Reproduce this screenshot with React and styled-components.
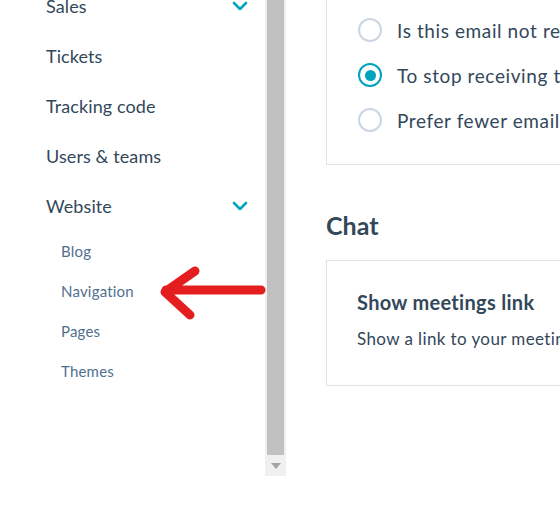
import React from 'react';
import styled, { createGlobalStyle } from 'styled-components';

const GlobalStyle = createGlobalStyle`
  html, body {
    margin: 0;
    padding: 0;
    background: #fff;
  }
  body {
    font-family: Lato, "Open Sans", sans-serif;
    color: #33475b;
    overflow: hidden;
  }
`;

const navItems = [
  { label: 'Sales', open: true },
  { label: 'Tickets' },
  { label: 'Tracking code' },
  { label: 'Users & teams' },
  { label: 'Website', open: true, children: ['Blog', 'Navigation', 'Pages', 'Themes'] }
];

const reasons = [
  { label: 'Is this email not relevant to you?' },
  { label: 'To stop receiving these emails', checked: true },
  { label: 'Prefer fewer emails from us' }
];

const Chevron = () => (
  <svg width="16" height="10" viewBox="0 0 16 10">
    <path d="M2 2l6 6 6-6" fill="none" stroke="#00a4bd" strokeWidth="2.6" strokeLinecap="round" strokeLinejoin="round" />
  </svg>
);

const App = () => (
  <Page>
    <GlobalStyle />
    <Sidebar>
      <Nav>
        {navItems.map((item) => (
          <React.Fragment key={item.label}>
            <NavItem>
              <span>{item.label}</span>
              {item.open && <Chevron />}
            </NavItem>
            {item.children && (
              <SubList>
                {item.children.map((c) => (
                  <SubItem key={c}>{c}</SubItem>
                ))}
              </SubList>
            )}
          </React.Fragment>
        ))}
      </Nav>
      <Scrollbar>
        <Thumb />
        <ArrowBtn>
          <svg width="10" height="6" viewBox="0 0 10 6">
            <path d="M0 0h10L5 6z" fill="#a3a3a3" />
          </svg>
        </ArrowBtn>
      </Scrollbar>
      <Annotation width="110" height="60" viewBox="0 0 110 60">
        <path
          d="M103 25 H8 M37 6 L7 27 L32 50"
          fill="none"
          stroke="#e41e1e"
          strokeWidth="9"
          strokeLinecap="round"
          strokeLinejoin="round"
        />
      </Annotation>
    </Sidebar>
    <Main>
      <Card top>
        <RadioList>
          {reasons.map((r) => (
            <RadioRow key={r.label}>
              <Radio checked={r.checked} />
              <span>{r.label}</span>
            </RadioRow>
          ))}
        </RadioList>
      </Card>
      <SectionTitle>Chat</SectionTitle>
      <Card>
        <CardTitle>Show meetings link</CardTitle>
        <CardText>Show a link to your meetings page in the chat</CardText>
      </Card>
    </Main>
  </Page>
);

const Page = styled.div`
  display: flex;
  width: 560px;
  height: 517px;
  overflow: hidden;
`;

const Sidebar = styled.div`
  position: relative;
  display: flex;
  flex: 0 0 286px;
  height: 476px;
`;

const Nav = styled.div`
  flex: 1;
  margin-top: -19px;
  padding-left: 46px;
  padding-right: 17px;
`;

const NavItem = styled.div`
  display: flex;
  align-items: center;
  justify-content: space-between;
  height: 50px;
  font-size: 18px;
  letter-spacing: 0.1px;
  color: #33475b;
`;

const SubList = styled.div`
  padding-left: 15px;
`;

const SubItem = styled.div`
  display: flex;
  align-items: center;
  height: 40px;
  font-size: 15px;
  letter-spacing: 0.2px;
  color: #516f90;
`;

const Scrollbar = styled.div`
  display: flex;
  flex-direction: column;
  width: 21px;
  padding: 0 2px;
  box-sizing: border-box;
  background: #f0f0f0;
`;

const Thumb = styled.div`
  flex: 1;
  background: #c1c1c1;
`;

const ArrowBtn = styled.div`
  display: flex;
  align-items: center;
  justify-content: center;
  height: 21px;
`;

const Annotation = styled.svg`
  position: absolute;
  left: 158px;
  top: 265px;
`;

const Main = styled.div`
  flex: 1;
  display: flex;
  flex-direction: column;
  padding-left: 40px;
  min-width: 0;
`;

const Card = styled.div`
  border: 1px solid #dfe3eb;
  border-right: none;
  border-top: ${(p) => (p.top ? 'none' : '1px solid #dfe3eb')};
  padding: ${(p) => (p.top ? '0 0 0 31px' : '28px 0 0 30px')};
  height: ${(p) => (p.top ? '165px' : '126px')};
  box-sizing: border-box;
  white-space: nowrap;
  overflow: hidden;
`;

const RadioList = styled.div`
  display: flex;
  flex-direction: column;
  gap: 21px;
  padding-top: 18px;
`;

const RadioRow = styled.div`
  display: flex;
  align-items: center;
  gap: 15px;
  height: 24px;
  font-size: 19px;
  letter-spacing: 0.6px;
  color: #33475b;
`;

const Radio = styled.span`
  flex: 0 0 auto;
  width: 24px;
  height: 24px;
  box-sizing: border-box;
  border-radius: 50%;
  border: 2px solid ${(p) => (p.checked ? '#00a4bd' : '#cbd6e2')};
  display: flex;
  align-items: center;
  justify-content: center;
  &::after {
    content: '';
    display: ${(p) => (p.checked ? 'block' : 'none')};
    width: 11px;
    height: 11px;
    border-radius: 50%;
    background: #00a4bd;
  }
`;

const SectionTitle = styled.h2`
  margin: 0;
  padding: 45px 0 20px;
  font-size: 25px;
  font-weight: 700;
  line-height: 30px;
  color: #33475b;
`;

const CardTitle = styled.div`
  font-size: 20px;
  font-weight: 700;
  letter-spacing: 0.3px;
  line-height: 26px;
  color: #33475b;
`;

const CardText = styled.div`
  margin-top: 12px;
  font-size: 17px;
  letter-spacing: 0.4px;
  line-height: 24px;
  color: #33475b;
`;

export default App;
